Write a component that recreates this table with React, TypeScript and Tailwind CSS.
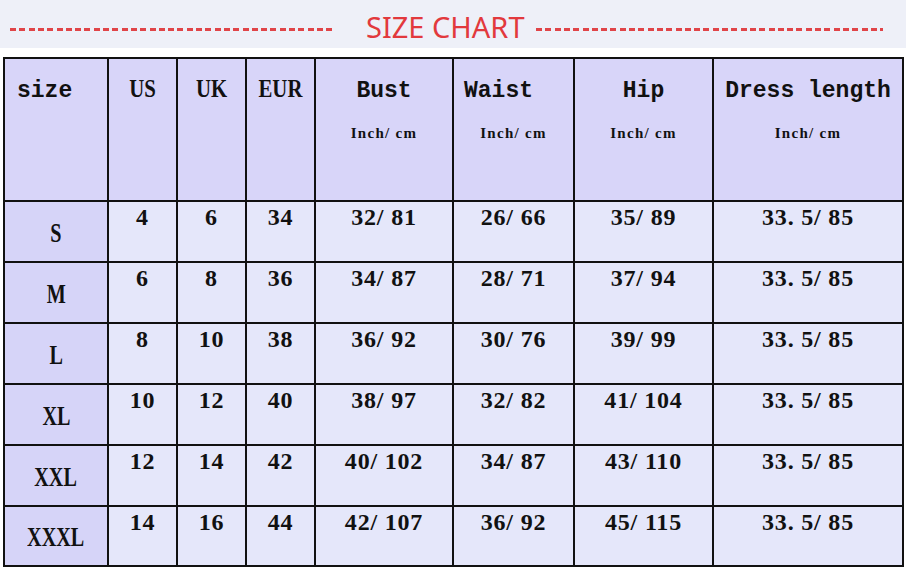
import React from "react";

const rows = [
  ["S", "4", "6", "34", "32/ 81", "26/ 66", "35/ 89", "33. 5/ 85"],
  ["M", "6", "8", "36", "34/ 87", "28/ 71", "37/ 94", "33. 5/ 85"],
  ["L", "8", "10", "38", "36/ 92", "30/ 76", "39/ 99", "33. 5/ 85"],
  ["XL", "10", "12", "40", "38/ 97", "32/ 82", "41/ 104", "33. 5/ 85"],
  ["XXL", "12", "14", "42", "40/ 102", "34/ 87", "43/ 110", "33. 5/ 85"],
  ["XXXL", "14", "16", "44", "42/ 107", "36/ 92", "45/ 115", "33. 5/ 85"],
];

const serif = { fontFamily: '"Liberation Serif", "Times New Roman", serif' };
const mono = { fontFamily: '"Liberation Mono", "Courier New", monospace' };
const sans = { fontFamily: '"Noto Sans", "Open Sans", sans-serif' };

function Sub() {
  return (
    <div className="mt-[23px] text-[15px] leading-none font-bold tracking-[1.3px] text-[#111]" style={serif}>
      Inch/ cm
    </div>
  );
}

export default function App() {
  return (
    <div className="w-[906px] h-[569px] bg-white overflow-hidden">
      <div className="h-[48px] bg-[#eef0f8] flex items-start pt-[12px] text-[#e2393d] text-[29px] leading-none whitespace-nowrap" style={sans}>
        <div className="ml-[10px] mt-[16px] w-[325px] h-[3px] bg-[repeating-linear-gradient(90deg,#e04448_0px,#e04448_6px,transparent_6px,transparent_9.3px)]" />
        <div className="ml-[31px]">SIZE CHART</div>
        <div className="ml-[11px] mt-[16px] w-[347px] h-[3px] bg-[repeating-linear-gradient(90deg,#e04448_0px,#e04448_6px,transparent_6px,transparent_9.3px)]" />
      </div>
      <div className="pt-[9px] pl-[3px]">
        <div className="w-[901px] bg-[#111] p-[2px] grid gap-[2px] grid-cols-[102px_67px_67px_67px_136px_119px_137px_188px] grid-rows-[141px_59px_59px_59px_59px_59px_58px] text-[#111]">
          <div className="bg-[#d8d5f9] pl-[12px] pt-[21px]">
            <div className="text-[23px] leading-none font-bold" style={mono}>size</div>
          </div>
          {["US", "UK", "EUR"].map((h) => (
            <div key={h} className="bg-[#d8d5f9] flex justify-center pt-[17px]">
              <div className="text-[26px] leading-none font-bold scale-x-[0.8]" style={serif}>{h}</div>
            </div>
          ))}
          <div className="bg-[#d8d5f9] flex flex-col items-center pt-[21px]">
            <div className="text-[23px] leading-none font-bold" style={mono}>Bust</div>
            <Sub />
          </div>
          <div className="bg-[#d8d5f9] flex flex-col items-center pt-[21px]">
            <div className="self-start pl-[10px] text-[23px] leading-none font-bold" style={mono}>Waist</div>
            <Sub />
          </div>
          <div className="bg-[#d8d5f9] flex flex-col items-center pt-[21px]">
            <div className="text-[23px] leading-none font-bold" style={mono}>Hip</div>
            <Sub />
          </div>
          <div className="bg-[#d8d5f9] flex flex-col items-center pt-[21px]">
            <div className="text-[23px] leading-none font-bold" style={mono}>Dress length</div>
            <Sub />
          </div>
          {rows.map((r) => (
            <React.Fragment key={r[0]}>
              <div className="bg-[#d6d4f8] flex items-center justify-center pt-[2px]">
                <div className="text-[28px] leading-none font-bold scale-x-[0.72]" style={serif}>{r[0]}</div>
              </div>
              {r.slice(1).map((v, i) => (
                <div key={i} className="bg-[#e5e7fa] flex justify-center pt-[3px]">
                  <div className="text-[24px] leading-none font-bold whitespace-pre tracking-[0.8px]" style={serif}>{v}</div>
                </div>
              ))}
            </React.Fragment>
          ))}
        </div>
      </div>
    </div>
  );
}
